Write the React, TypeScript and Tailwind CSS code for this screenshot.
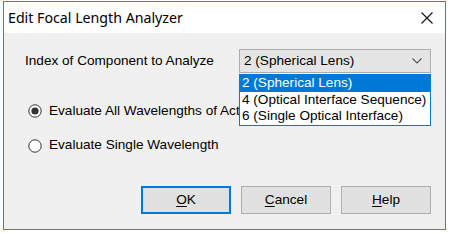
import React from "react";

const Radio = ({ checked }: { checked?: boolean }) => (
  <svg width="14" height="14" viewBox="0 0 14 14" className="shrink-0">
    <circle cx="7" cy="7" r="6.2" fill="#fff" stroke="#333" strokeWidth="1" />
    {checked && <circle cx="7" cy="7" r="3.6" fill="#333" />}
  </svg>
);

const Button = ({
  label,
  accel,
  primary = false,
}: {
  label: string;
  accel: string;
  primary?: boolean;
}) => (
  <div
    className={`w-[90px] h-[28px] flex items-center justify-center bg-[#e1e1e1] text-[13.6px] text-black ${
      primary ? "border-2 border-[#0078d7]" : "border border-[#adadad]"
    }`}
  >
    <span>
      <span className="underline underline-offset-2">{accel}</span>
      {label}
    </span>
  </div>
);

const options = [
  "2 (Spherical Lens)",
  "4 (Optical Interface Sequence)",
  "6 (Single Optical Interface)",
];

export default function App() {
  return (
    <div
      className="w-[452px] h-[233px] bg-white pl-[3px] pt-[1px]"
      style={{ fontFamily: '"Liberation Sans", Arial, sans-serif' }}
    >
      <div className="w-[443px] h-[229px] border border-[#2a86d8] flex flex-col bg-[#f0f0f0]">
        {/* Title bar */}
        <div className="h-[31px] bg-white flex items-center justify-between pl-[4px] pr-[12px] shrink-0">
          <span
            className="text-[14.2px] text-black"
            style={{ fontFamily: '"Noto Sans", "Open Sans", sans-serif' }}
          >
            Edit Focal Length Analyzer
          </span>
          <svg width="12" height="12" viewBox="0 0 12 12">
            <path d="M0.5 0.5 L11.5 11.5 M11.5 0.5 L0.5 11.5" stroke="#111" strokeWidth="1.1" />
          </svg>
        </div>

        {/* Body */}
        <div className="flex-1 flex flex-col pl-[21px] pr-[14px] pt-[16px] text-[13.6px] text-black">
          <div className="flex items-center justify-between">
            <span>Index of Component to Analyze</span>
            <div className="relative w-[192px]">
              <div className="h-[24px] bg-[#e5e5e5] border border-[#adadad] flex items-center justify-between pl-[4px] pr-[8px]">
                <span>2 (Spherical Lens)</span>
                <svg width="10" height="6" viewBox="0 0 10 6">
                  <path d="M0.5 0.5 L5 5 L9.5 0.5" fill="none" stroke="#555" strokeWidth="1.1" />
                </svg>
              </div>
              {/* open dropdown list, drawn over the radio text */}
              <div className="absolute left-0 top-[25px] w-[192px] bg-white border border-[#0078d7] z-10">
                {options.map((o, i) => (
                  <div
                    key={o}
                    className={`h-[16.7px] leading-[16.7px] pl-[2px] ${
                      i === 0 ? "bg-[#0078d7] text-white" : "text-black"
                    }`}
                  >
                    {o}
                  </div>
                ))}
              </div>
            </div>
          </div>

          <div className="flex items-center gap-[7px] mt-[28px] pl-[3px]">
            <Radio checked />
            <span className="w-[190px] overflow-hidden whitespace-nowrap">
              Evaluate All Wavelengths of Active Configuration
            </span>
          </div>
          <div className="flex items-center gap-[7px] mt-[14px] pl-[3px]">
            <Radio />
            <span>Evaluate Single Wavelength</span>
          </div>

          <div className="flex justify-end gap-[10px] mt-auto mb-[15px]">
            <Button accel="O" label="K" primary />
            <Button accel="C" label="ancel" />
            <Button accel="H" label="elp" />
          </div>
        </div>
      </div>
    </div>
  );
}
